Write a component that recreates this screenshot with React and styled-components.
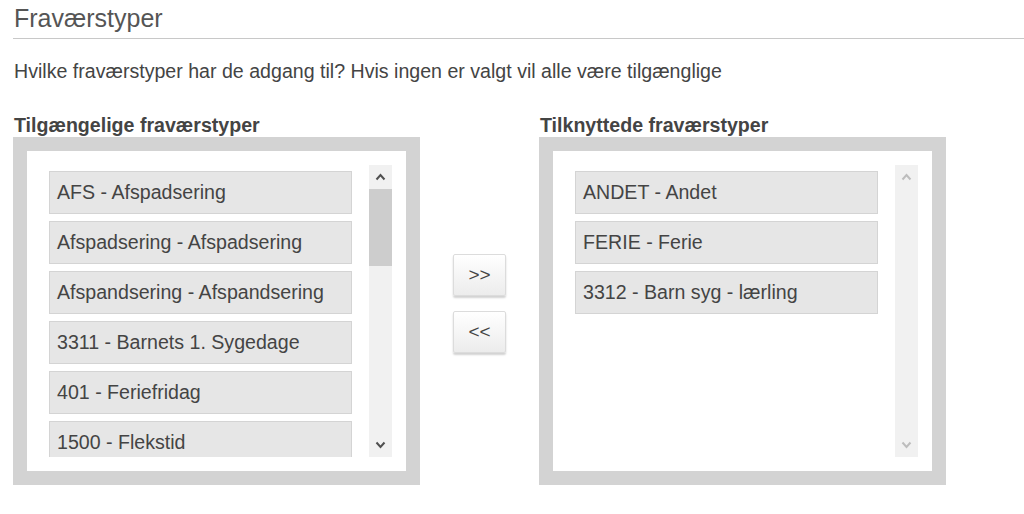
import React from 'react'
import styled, { createGlobalStyle } from 'styled-components'

const GlobalStyle = createGlobalStyle`
  *, *::before, *::after {
    box-sizing: border-box;
  }
  body {
    margin: 0;
    background: #fff;
    font-family: "Liberation Sans", Arial, sans-serif;
    color: #444;
  }
`

const Page = styled.div`
  padding: 3px 0 0 13px;
`

const Title = styled.h1`
  margin: 0;
  font-size: 25px;
  font-weight: normal;
  line-height: 30px;
  color: #555;
  padding: 0 0 5px 1px;
  border-bottom: 1px solid #c8c8c8;
`

const Description = styled.p`
  margin: 21px 0 0 1px;
  font-size: 19.6px;
  line-height: 22px;
  color: #444;
`

const Columns = styled.div`
  display: flex;
  margin-top: 32px;
`

const Column = styled.div`
  display: flex;
  flex-direction: column;
  width: 407px;
`

const Heading = styled.h2`
  margin: 0 0 1px 1px;
  font-size: 19.6px;
  font-weight: bold;
  line-height: 22px;
  color: #444;
`

const Frame = styled.div`
  background: #d3d3d3;
  padding: 14px;
`

const Inner = styled.div`
  background: #fff;
  padding: 14px;
  display: flex;
`

const List = styled.div`
  flex: 1;
  height: 292px;
  overflow: hidden;
  padding: 6px 17px 0 8px;
  display: flex;
  flex-direction: column;
  gap: 7px;
`

const Item = styled.div`
  flex: 0 0 auto;
  height: 43px;
  display: flex;
  align-items: center;
  padding-left: 7px;
  background: #e6e6e6;
  border: 1px solid #d4d4d4;
  font-size: 19.6px;
  color: #444;
  white-space: nowrap;
`

const Scrollbar = styled.div`
  width: 23px;
  height: 292px;
  background: #f1f1f1;
  display: flex;
  flex-direction: column;
`

const Arrow = styled.div`
  height: 24px;
  display: flex;
  align-items: center;
  justify-content: center;
  color: ${({ disabled }) => (disabled ? '#bdbdbd' : '#505050')};
`

const Track = styled.div`
  flex: 1;
`

const Thumb = styled.div`
  height: 77px;
  background: #cdcdcd;
`

const Middle = styled.div`
  width: 119px;
  display: flex;
  flex-direction: column;
  align-items: center;
  padding-top: 140px;
  gap: 15px;
`

const MoveButton = styled.button`
  width: 53px;
  height: 42px;
  border: 1px solid #dcdcdc;
  border-radius: 2px;
  background: linear-gradient(#ffffff, #ececec);
  box-shadow: 0 2px 2px rgba(0, 0, 0, 0.18);
  font-family: "Liberation Sans", Arial, sans-serif;
  font-size: 19px;
  color: #444;
  padding: 0;
  cursor: pointer;
`

const Chevron = ({ up }) => (
  <svg width="11" height="8" viewBox="0 0 11 8">
    <path
      d={up ? 'M1.5 6.5 L5.5 2 L9.5 6.5' : 'M1.5 1.5 L5.5 6 L9.5 1.5'}
      fill="none"
      stroke="currentColor"
      strokeWidth="2"
    />
  </svg>
)

const Box = ({ items, scrollable }) => (
  <Frame>
    <Inner>
      <List>
        {items.map((it) => (
          <Item key={it}>{it}</Item>
        ))}
      </List>
      <Scrollbar>
        <Arrow disabled={!scrollable}>
          <Chevron up />
        </Arrow>
        <Track>{scrollable && <Thumb />}</Track>
        <Arrow disabled={!scrollable}>
          <Chevron />
        </Arrow>
      </Scrollbar>
    </Inner>
  </Frame>
)

const available = [
  'AFS - Afspadsering',
  'Afspadsering - Afspadsering',
  'Afspandsering - Afspandsering',
  '3311 - Barnets 1. Sygedage',
  '401 - Feriefridag',
  '1500 - Flekstid',
]

const attached = ['ANDET - Andet', 'FERIE - Ferie', '3312 - Barn syg - lærling']

const App = () => {
  return (
    <Page>
      <GlobalStyle />
      <Title>Fraværstyper</Title>
      <Description>
        Hvilke fraværstyper har de adgang til? Hvis ingen er valgt vil alle være tilgænglige
      </Description>
      <Columns>
        <Column>
          <Heading>Tilgængelige fraværstyper</Heading>
          <Box items={available} scrollable />
        </Column>
        <Middle>
          <MoveButton>&gt;&gt;</MoveButton>
          <MoveButton>&lt;&lt;</MoveButton>
        </Middle>
        <Column>
          <Heading>Tilknyttede fraværstyper</Heading>
          <Box items={attached} />
        </Column>
      </Columns>
    </Page>
  )
}

export default App
